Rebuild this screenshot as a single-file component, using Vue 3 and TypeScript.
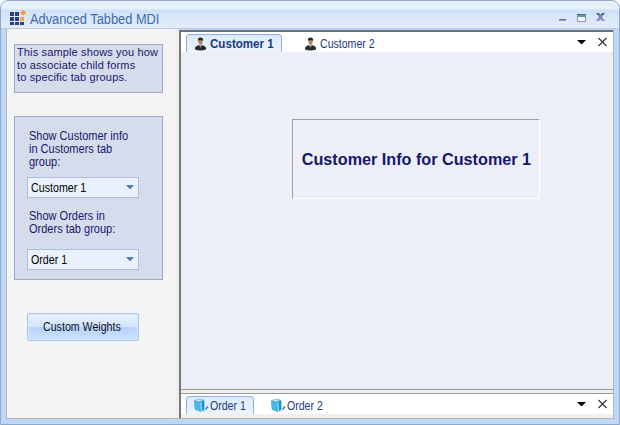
<script setup lang="ts">
import { ref } from 'vue'

interface Tab { id: number; label: string }

const customers: Tab[] = [{ id: 1, label: 'Customer 1' }, { id: 2, label: 'Customer 2' }]
const orders: Tab[] = [{ id: 1, label: 'Order 1' }, { id: 2, label: 'Order 2' }]
const activeCustomer = ref(1)
const activeOrder = ref(1)
</script>

<template>
  <div class="window">
    <header class="titlebar">
      <svg class="logo" width="17" height="17" viewBox="0 0 17 17">
        <g fill="#303c78">
          <rect x="0" y="2" width="4" height="4" /><rect x="5" y="2" width="4" height="4" />
          <rect x="0" y="7" width="4" height="4" /><rect x="5" y="7" width="4" height="4" />
          <rect x="0" y="12" width="4" height="3" /><rect x="5" y="12" width="4" height="3" /><rect x="10" y="12" width="4" height="3" />
        </g>
        <rect x="10" y="7" width="4" height="4" fill="#f5a04c" />
        <path d="M12.8 -.2L16.2 2.5L13.6 5.6L10 3.2Z" fill="#f59a35" />
      </svg>
      <h1><span>Advanced Tabbed MDI</span></h1>
      <svg class="controls" width="48" height="12" viewBox="0 0 48 12">
        <path d="M1 8.5H8" stroke="#687582" /><path d="M1 9.5H8" stroke="#9c99dd" />
        <path d="M19 3.5H28" stroke="#536b70" /><path d="M19 4.5H28M19 5.5H28" stroke="#5ba29c" />
        <path d="M19.5 6V10.5H27.5V6" fill="#f1f5fd" stroke="#8f91cd" />
        <path d="M38 2H41L47 10H44Z" fill="#7789b1" /><path d="M44 2H47L41 10H38Z" fill="#7789b1" />
        <path d="M38 2H41L42.5 4H39.5ZM44 2H47L45.5 4H42.5Z" fill="#4e777e" />
        <path d="M39.5 8H42.5L41 10H38ZM42.5 8H45.5L47 10H44Z" fill="#9b91d5" />
      </svg>
    </header>

    <div class="body">
      <aside class="sidebar">
        <div class="note">This sample shows you how<br>to associate child forms<br>to specific tab groups.</div>
        <section class="options">
          <label>Show Customer info<br>in Customers tab<br>group:</label>
          <div class="combo"><span>Customer 1</span><i class="arrow"></i></div>
          <label class="second">Show Orders in<br>Orders tab group:</label>
          <div class="combo"><span>Order 1</span><i class="arrow"></i></div>
        </section>
        <button class="weights"><span>Custom Weights</span></button>
      </aside>

      <main class="mdi">
        <nav class="strip customers">
          <div v-for="t in customers" :key="t.id" class="tab" :class="{ active: t.id === activeCustomer }" @click="activeCustomer = t.id">
            <svg width="14" height="14" viewBox="0 0 14 14">
              <path d="M1 12.5V10.8Q1.6 9.2 5 8H8Q11.6 9.2 12 10.8V12.5Q6.5 14.5 1 12.5Z" fill="#292c2e" />
              <path d="M5 7.4L6.5 11L8 7.4Z" fill="#dfe6ed" /><path d="M6.1 8.8H6.9L6.8 11H6.2Z" fill="#445" />
              <path d="M4.4 3.5H8.6Q8.8 7.8 6.5 8Q4.3 7.8 4.4 3.5Z" fill="#b8845c" />
              <path d="M4 4.2Q3.3 .8 6.5 .6Q9.8 .8 9 4.2L8.4 3.6H4.6Z" fill="#24282c" />
            </svg>
            <span>{{ t.label }}</span>
          </div>
          <div class="tools"><svg width="32" height="12" viewBox="0 0 32 12"><path d="M0 4H9L5 8H4Z" fill="#000" /><path d="M21.5 2L29.5 10M29.5 2L21.5 10" stroke="#333" stroke-width="1.15" /></svg></div>
        </nav>
        <div class="document">
          <div class="info"><span>Customer Info for Customer {{ activeCustomer }}</span></div>
        </div>
        <div class="splitter"></div>
        <nav class="strip orders">
          <div v-for="t in orders" :key="t.id" class="tab" :class="{ active: t.id === activeOrder }" @click="activeOrder = t.id">
            <svg width="15" height="15" viewBox="0 0 15 15">
              <path d="M0 2.5L6 .8L10 2V11L6.5 14L.8 11.5Z" fill="#3fb4e4" />
              <path d="M0 2.5L6 .8L10 2L4.5 3.8Z" fill="#8fb6c8" /><path d="M2 2.5L6 1.4L8.5 2.1L4.5 3.2Z" fill="#d9f1fa" />
              <path d="M.3 3L7 4.4L7.6 13.3L1.2 11.3Z" fill="#43b8e9" /><path d="M7.2 4L10.4 2.4V11.4L7.6 13.6Z" fill="#1790cb" />
              <path d="M7 4.4L7.6 13.3" stroke="#c9efff" stroke-width=".8" />
              <path d="M11.6 11.6L13.8 8.4" stroke="#408dba" stroke-width="1.7" /><path d="M9.5 13.4L11.5 12" stroke="#85c2dc" />
            </svg>
            <span>{{ t.label }}</span>
          </div>
          <div class="tools"><svg width="32" height="12" viewBox="0 0 32 12"><path d="M0 4H9L5 8H4Z" fill="#000" /><path d="M21.5 2L29.5 10M29.5 2L21.5 10" stroke="#333" stroke-width="1.15" /></svg></div>
        </nav>
        <div class="foot"></div>
      </main>
    </div>
  </div>
</template>

<style>
body { margin: 0; background: #fff; }
</style>
<style scoped>
* { box-sizing: border-box; }
.window { width: 620px; height: 425px; display: flex; flex-direction: column; border: 1px solid #91a7c9; border-radius: 8px 8px 0 0; background: #bdd8fb; overflow: hidden; font: 12px/13px "Liberation Sans", sans-serif; color: #17176f; }
.titlebar { height: 28px; flex: none; display: flex; align-items: flex-start; padding: 8px 13px 0 9px; border-top: 1px solid #f0f5fd; border-bottom: 1px solid #bdc9e2; background: linear-gradient(#e6effc 0 7px, #cfe1f7 8px, #e3edfb 26px); }
.logo { flex: none; overflow: visible; }
h1 { flex: 1; margin: 1px 0 0 3px; font-size: 14px; line-height: 16px; font-weight: normal; color: #3d6bb0; }
h1 span { display: inline-block; white-space: nowrap; transform: scaleX(.915); transform-origin: left; }
.controls { flex: none; margin-top: 1px; }
.body { height: 390px; flex: none; margin: 0 5px; display: flex; border: 1px solid #b4b4b0; border-top: 0; }
.sidebar { width: 172px; flex: none; padding: 15px 0 0 7px; background: linear-gradient(90deg, #f4f4f4 168px, #ededed 169px, #f0f0f0); }
.note, .options { width: 149px; border: 1px solid #9ba9d0; background: #d7dcec; }
.note { height: 49px; padding: 1px 0 0 2px; font-size: 11px; line-height: 12.5px; white-space: nowrap; letter-spacing: .14px; }
.options { height: 164px; margin-top: 23px; padding: 13px 0 0 12px; }
label { display: block; width: 125px; padding-left: 2px; white-space: nowrap; transform: scaleX(.917); transform-origin: 2px 0; }
.combo { width: 112px; height: 21px; margin-top: 8px; border: 1px solid #a9c0e2; display: flex; align-items: center; justify-content: space-between; padding: 1px 4px 0 3px; background: #e9f2fc; color: #000; }
.combo span { transform: scaleX(.89); transform-origin: left; }
.second { margin-top: 12px; }
.second + .combo { margin-top: 13px; }
.arrow { width: 8px; height: 4px; margin-top: -2px; background: #4c7cb7; clip-path: polygon(0 0, 100% 0, 55% 100%, 45% 100%); }
.weights { display: flex; align-items: center; justify-content: center; width: 112px; height: 28px; margin: 33px 0 0 13px; padding: 0; border: 1px solid #a6c6f1; border-radius: 2px; background: linear-gradient(#e7f2ff, #d2e5fd 48%, #b5d3fb 52%, #cce2ff); box-shadow: inset 0 0 0 1px #d8eafd; font: 12px "Liberation Sans", sans-serif; color: #101018; white-space: nowrap; }
.weights span { transform: scaleX(.885); margin-right: 2px; }
.mdi { flex: 1; min-width: 0; margin-top: 1px; border-left: 2px solid #777; border-top: 2px solid #727272; display: flex; flex-direction: column; }
.strip { height: 20px; flex: none; display: flex; align-items: flex-end; padding-left: 5px; background: #fff; }
.tab { height: 18px; display: flex; align-items: center; border: 1px solid transparent; border-bottom: 0; padding-left: 7px; color: #163b81; white-space: nowrap; }
.tab svg { flex: none; margin-right: 2px; }
.tab span { padding-top: 2px; transform: scaleX(.88); transform-origin: left; }
.tab.active { border-color: #8fb1e3; border-radius: 4px 4px 0 0; background: linear-gradient(#dceafb, #edf4fd); }
.customers .tab { width: 96px; }
.customers .active { font-weight: bold; }
.customers .active span { transform: scaleX(.965); }
.customers .tab + .tab { margin-left: 14px; }
.orders .tab { width: 68px; }
.orders .tab svg { margin-right: 1px; }
.orders .tab + .tab { margin-left: 9px; }
.tools { margin: 0 4px 2px auto; height: 14px; }
.tools svg { display: block; }
.document { height: 337px; flex: none; display: flex; justify-content: center; align-items: flex-start; padding: 67px 0 0 38px; background: #eceff8; }
.info { width: 248px; height: 80px; display: flex; align-items: center; justify-content: center; border: 1px solid #a0a0a0; border-right-color: #fff; border-bottom-color: #fff; font: bold 17px "Liberation Sans", sans-serif; white-space: nowrap; color: #16166f; }
.info span { padding-top: 2px; transform: scaleX(.952); }
.splitter { height: 5px; flex: none; border: solid #9a9a9d; border-width: 1px 0; background: #f0f0f0; }
.foot { flex: 1; background: #f0f0f0; }
</style>
